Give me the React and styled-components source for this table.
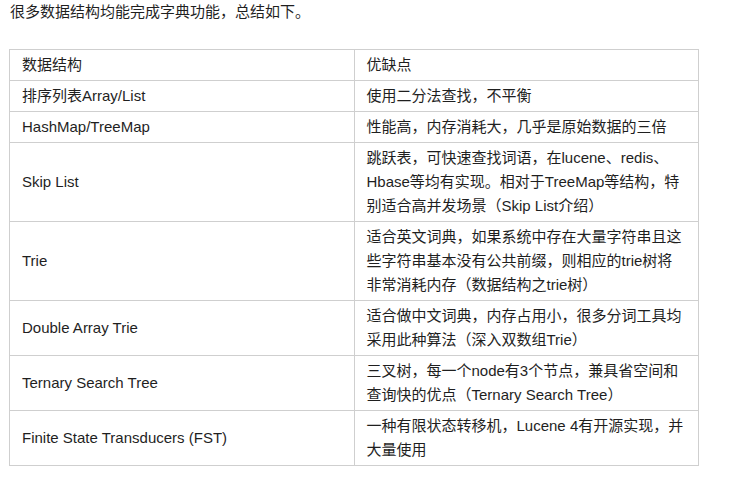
import React from 'react';
import styled, { createGlobalStyle } from 'styled-components';

const GlobalStyle = createGlobalStyle`
  html, body {
    margin: 0;
    padding: 0;
    background: #ffffff;
  }
  body {
    font-family: "Liberation Sans", "Noto Sans CJK SC", sans-serif;
    color: #1f1f1f;
  }
`;

const Page = styled.div`
  display: flex;
  flex-direction: column;
  padding: 0 0 0 9px;
`;

const Intro = styled.p`
  margin: 0 0 25px 1px;
  font-size: 15px;
  line-height: 24px;
`;

const Table = styled.table`
  width: 690px;
  border-collapse: collapse;
  table-layout: fixed;
  font-size: 15px;
  line-height: 24px;
`;

const Cell = styled.td`
  border: 1px solid #cfcfcf;
  padding: 3px 12px;
  vertical-align: middle;
  text-align: left;
  font-weight: normal;
`;

const Line = styled.span`
  display: block;
  white-space: nowrap;
`;

const rows = [
  ['数据结构', ['优缺点']],
  ['排序列表Array/List', ['使用二分法查找，不平衡']],
  ['HashMap/TreeMap', ['性能高，内存消耗大，几乎是原始数据的三倍']],
  ['Skip List', [
    '跳跃表，可快速查找词语，在lucene、redis、',
    'Hbase等均有实现。相对于TreeMap等结构，特',
    '别适合高并发场景（Skip List介绍）',
  ]],
  ['Trie', [
    '适合英文词典，如果系统中存在大量字符串且这',
    '些字符串基本没有公共前缀，则相应的trie树将',
    '非常消耗内存（数据结构之trie树）',
  ]],
  ['Double Array Trie', [
    '适合做中文词典，内存占用小，很多分词工具均',
    '采用此种算法（深入双数组Trie）',
  ]],
  ['Ternary Search Tree', [
    '三叉树，每一个node有3个节点，兼具省空间和',
    '查询快的优点（Ternary Search Tree）',
  ]],
  ['Finite State Transducers (FST)', [
    '一种有限状态转移机，Lucene 4有开源实现，并',
    '大量使用',
  ]],
];

export default function App() {
  return (
    <Page>
      <GlobalStyle />
      <Intro>很多数据结构均能完成字典功能，总结如下。</Intro>
      <Table>
        <tbody>
          {rows.map(([name, lines]) => (
            <tr key={name}>
              <Cell>{name}</Cell>
              <Cell>
                {lines.map((l) => (
                  <Line key={l}>{l}</Line>
                ))}
              </Cell>
            </tr>
          ))}
        </tbody>
      </Table>
    </Page>
  );
}
